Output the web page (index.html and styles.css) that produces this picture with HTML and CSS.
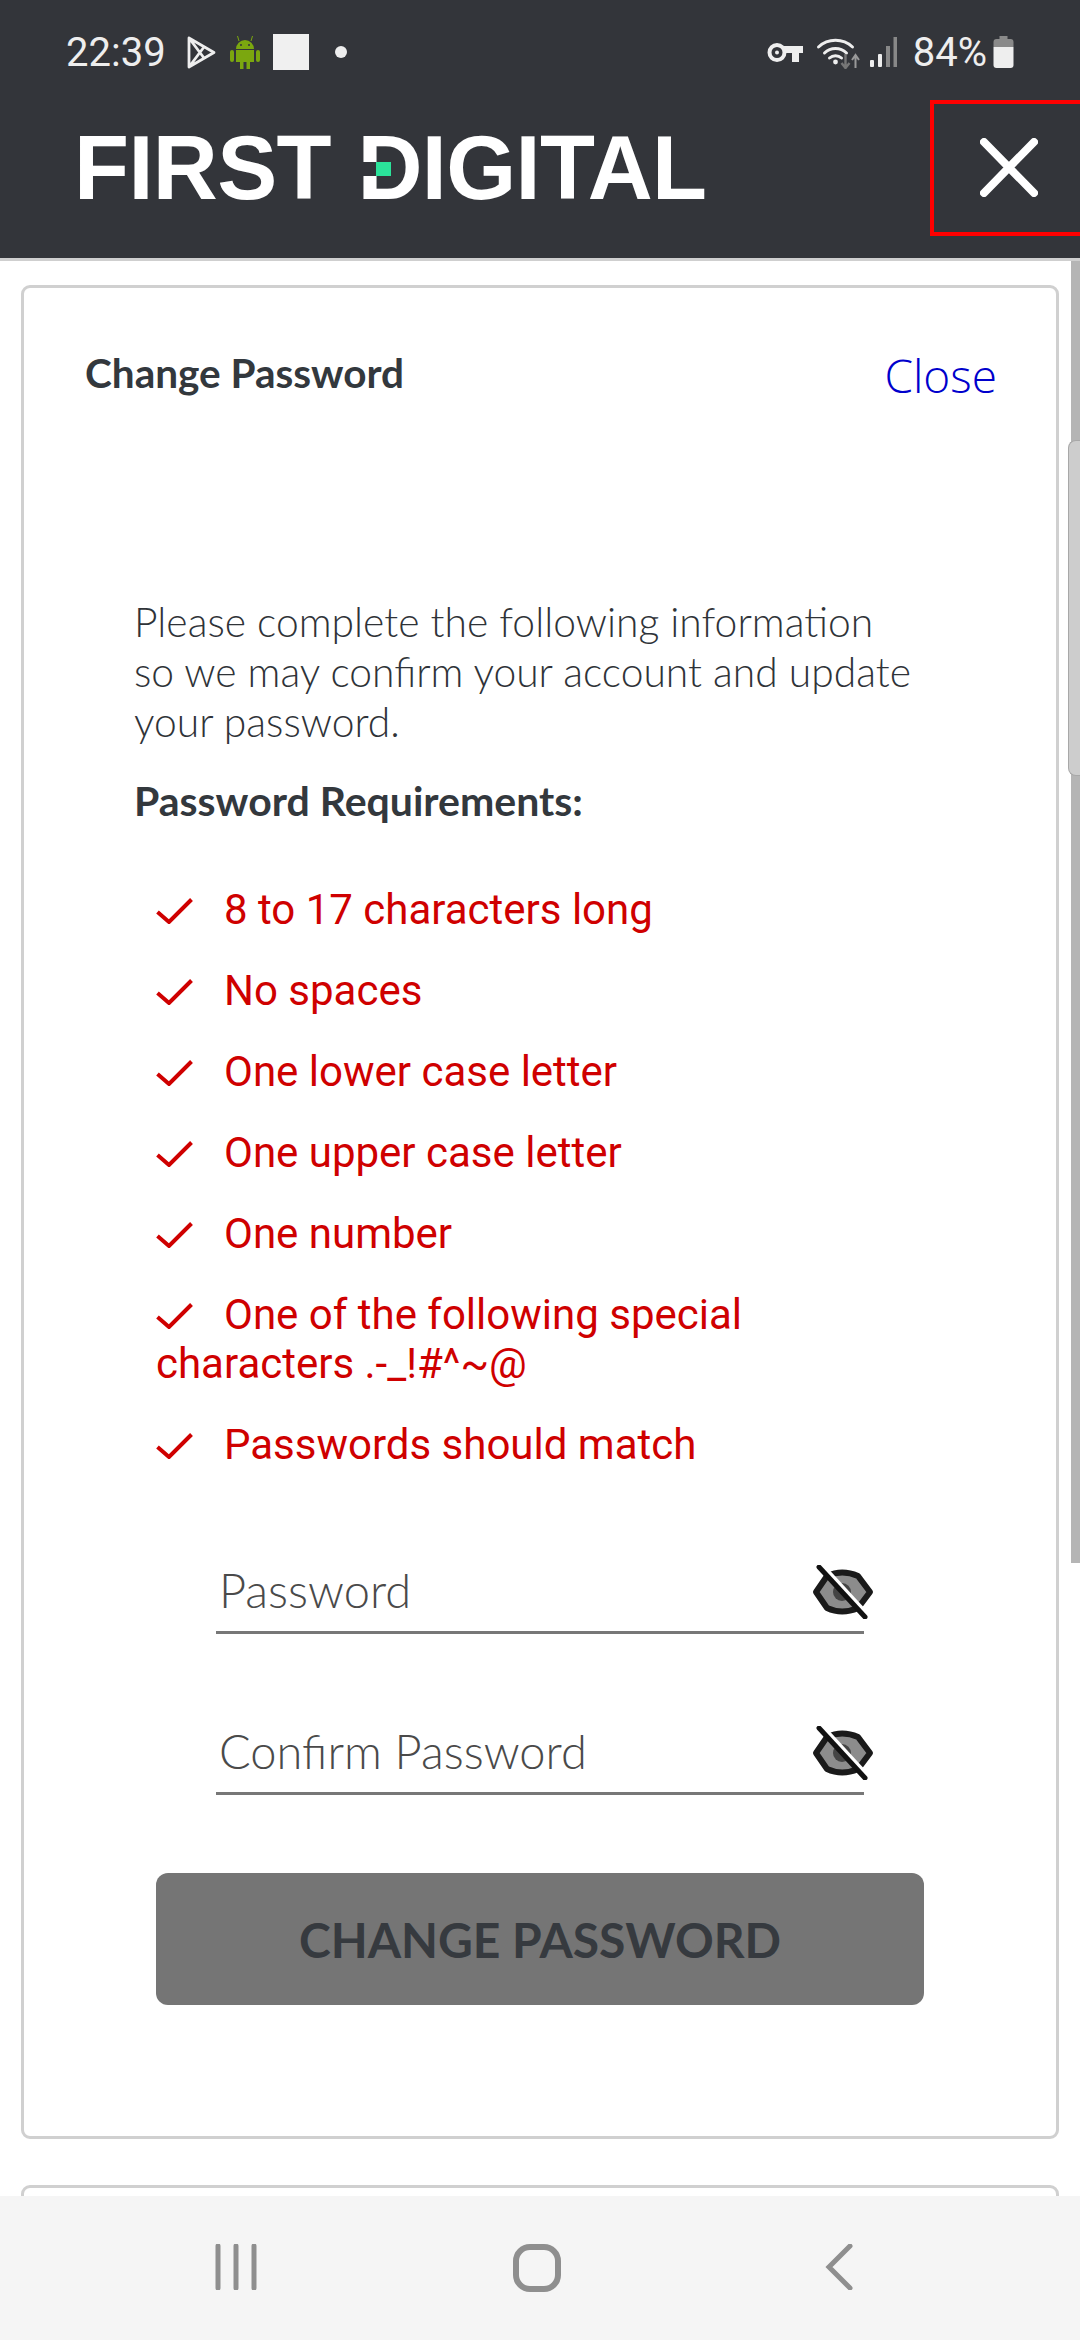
FILE: index.html
```html
<!DOCTYPE html>
<html lang="en">
<head>
    <meta charset="UTF-8">
    <meta name="viewport" content="width=device-width, initial-scale=1.0">
    <title>Change Password</title>
    <link rel="stylesheet" href="styles.css">
</head>
<body>
    <header class="top">
        <div class="status">
            <div class="status-left">
                <span class="clock">22:39</span>
                <svg class="ic-play" viewBox="0 0 30 33"><path d="M3 2 L28 16.5 L3 31 Z M3 2 L18 22 M3 31 L18 11" fill="none" stroke="#eee" stroke-width="2.8" stroke-linejoin="round"/></svg>
                <svg class="ic-android" viewBox="0 0 30 35"><path d="M6 14 A9 9 0 0 1 24 14 Z M6 15 H24 V27 H20 V34 H16.5 V27 H13.5 V34 H10 V27 H6 Z" fill="#7ba70f"/><rect x="0" y="15" width="4" height="12" rx="2" fill="#7ba70f"/><rect x="26" y="15" width="4" height="12" rx="2" fill="#7ba70f"/><path d="M9 6 L7.5 1 M21 6 L22.5 1" stroke="#7ba70f" stroke-width="1"/><circle cx="11" cy="10" r="1" fill="#33353a"/><circle cx="19" cy="10" r="1" fill="#33353a"/></svg>
                <span class="ic-square"></span>
                <span class="ic-dot"></span>
            </div>
            <div class="status-right">
                <svg class="ic-key" viewBox="0 0 36 21"><circle cx="10" cy="10.5" r="7.5" fill="none" stroke="#eee" stroke-width="4"/><circle cx="10" cy="10.5" r="2" fill="#eee"/><path d="M17 4 H36 V11 H32 V20 H25 V11 H17 Z" fill="#eee"/></svg>
                <svg class="ic-wifi" viewBox="0 0 44 33"><path d="M2 11 A25 25 0 0 1 36 11 M8 17 A16 16 0 0 1 30 17 M13 22 A9 9 0 0 1 25 22" fill="none" stroke="#eee" stroke-width="3" stroke-linecap="round"/><circle cx="19" cy="26" r="2.4" fill="#eee"/><path d="M29 18 V31 M25 27 L29 32 L33 27" fill="none" stroke="#777" stroke-width="2.4"/><path d="M39 32 V20 M35.5 24 L39 19 L42.5 24" fill="none" stroke="#999" stroke-width="2"/></svg>
                <svg class="ic-signal" viewBox="0 0 27 30"><rect x="0" y="23" width="4" height="7" rx="1" fill="#eee"/><rect x="8" y="17" width="4" height="13" rx="1" fill="#eee"/><rect x="16" y="9" width="4" height="21" fill="#888"/><rect x="23.5" y="0" width="3.5" height="30" fill="#888"/></svg>
                <span class="clock pct">84%</span>
                <svg class="ic-battery" viewBox="0 0 20 32"><path d="M6 0 H14 V3 H17 Q20 3 20 6 V11 H0 V6 Q0 3 3 3 H6 Z" fill="#8a8a8a"/><path d="M0 11 H20 V29 Q20 32 17 32 H3 Q0 32 0 29 Z" fill="#eee"/></svg>
            </div>
        </div>
        <div class="brand">
            <span class="logo">FIRST <span class="logo-d">D<i class="d-cut"></i><i class="d-pixel"></i></span>IGITAL</span>
            <button class="x-btn" aria-label="Close">
                <svg viewBox="0 0 58 59"><path d="M4 4 L54 55 M54 4 L4 55" stroke="#fff" stroke-width="8" stroke-linecap="round"/></svg>
            </button>
        </div>
    </header>

    <main class="content">
        <section class="card">
            <div class="card-head">
                <h1 class="card-title">Change Password</h1>
                <a class="close-link">Close</a>
            </div>
            <div class="card-body">
                <p class="intro">Please complete the following information<br>so we may confirm your account and update<br>your password.</p>
                <p class="req-title">Password Requirements:</p>
                <ul class="reqs">
                    <li><svg class="check" viewBox="0 0 37 26"><path d="M1.5 14 L13 24 L35.5 1.5"/></svg>8 to 17 characters long</li>
                    <li><svg class="check" viewBox="0 0 37 26"><path d="M1.5 14 L13 24 L35.5 1.5"/></svg>No spaces</li>
                    <li><svg class="check" viewBox="0 0 37 26"><path d="M1.5 14 L13 24 L35.5 1.5"/></svg>One lower case letter</li>
                    <li><svg class="check" viewBox="0 0 37 26"><path d="M1.5 14 L13 24 L35.5 1.5"/></svg>One upper case letter</li>
                    <li><svg class="check" viewBox="0 0 37 26"><path d="M1.5 14 L13 24 L35.5 1.5"/></svg>One number</li>
                    <li><svg class="check" viewBox="0 0 37 26"><path d="M1.5 14 L13 24 L35.5 1.5"/></svg>One of the following special characters .-_!#^~@</li>
                    <li><svg class="check" viewBox="0 0 37 26"><path d="M1.5 14 L13 24 L35.5 1.5"/></svg>Passwords should match</li>
                </ul>
                <div class="field">
                    <span class="field-label">Password</span>
                    <svg class="eye" viewBox="0 0 62 54"><path d="M4 27 L15 11 Q30 4 46 11 L58 27 L46 43 Q30 50 15 43 Z" fill="#8c8c8c" stroke="#1a1a1a" stroke-width="6" stroke-linejoin="round"/><circle cx="30" cy="27" r="9" fill="#444"/><path d="M10 2 L56 52" stroke="#fff" stroke-width="7"/><path d="M7 2 L53 52" stroke="#111" stroke-width="5" stroke-linecap="round"/></svg>
                </div>
                <div class="field">
                    <span class="field-label">Confirm Password</span>
                    <svg class="eye" viewBox="0 0 62 54"><path d="M4 27 L15 11 Q30 4 46 11 L58 27 L46 43 Q30 50 15 43 Z" fill="#8c8c8c" stroke="#1a1a1a" stroke-width="6" stroke-linejoin="round"/><circle cx="30" cy="27" r="9" fill="#444"/><path d="M10 2 L56 52" stroke="#fff" stroke-width="7"/><path d="M7 2 L53 52" stroke="#111" stroke-width="5" stroke-linecap="round"/></svg>
                </div>
                <button class="submit">CHANGE PASSWORD</button>
            </div>
        </section>
        <section class="card card-next"></section>
    </main>

    <nav class="navbar">
        <svg class="nav-recent" viewBox="0 0 42 46"><path d="M3 2 V44 M21 2 V44 M39 2 V44"/></svg>
        <svg class="nav-home" viewBox="0 0 48 48"><rect x="3" y="3" width="42" height="42" rx="14"/></svg>
        <svg class="nav-back" viewBox="0 0 28 46"><path d="M25 2 L4 23 L25 44"/></svg>
    </nav>

    <div class="scroll-track"><div class="scroll-thumb"></div></div>
    <div class="red-box"></div>
</body>
</html>
```

FILE: styles.css
```css
* { box-sizing: border-box; }
html, body { margin: 0; padding: 0; }
body {
    position: relative;
    width: 1080px;
    height: 2340px;
    overflow: hidden;
    display: flex;
    flex-direction: column;
    background: #fff;
    font-family: Lato, "Liberation Sans", sans-serif;
}

/* top bar */
.top { height: 261px; flex: none; background: #33353a; border-bottom: 3px solid #cfcfcf; }
.status { height: 100px; padding: 30px 66px 0 66px; display: flex; justify-content: space-between; align-items: flex-start; }
.status-left, .status-right { display: flex; align-items: center; height: 44px; }
.clock { font-family: Roboto, sans-serif; font-size: 40px; color: #eee; }
.ic-play { width: 30px; height: 33px; margin-left: 20px; }
.ic-android { width: 30px; height: 35px; margin-left: 14px; }
.ic-square { width: 36px; height: 36px; margin-left: 13px; background: #f0f0f0; }
.ic-dot { width: 12px; height: 12px; margin-left: 26px; border-radius: 50%; background: #eee; }
.ic-key { width: 36px; height: 21px; }
.ic-wifi { width: 45px; height: 33px; margin-left: 13px; }
.ic-signal { width: 27px; height: 30px; margin-left: 9px; }
.pct { margin-left: 16px; }
.ic-battery { width: 21px; height: 32px; margin-left: 6px; }

.brand { height: 158px; padding: 18px 42px 0 74px; display: flex; justify-content: space-between; align-items: flex-start; }
.logo { font-family: "Liberation Sans", Arial, sans-serif; font-weight: 700; font-size: 90px; line-height: 100px; color: #fff; letter-spacing: -0.6px; word-spacing: 2px; white-space: nowrap; }
.logo-d { position: relative; display: inline-block; }
.d-cut { position: absolute; left: 4px; top: 44px; width: 15px; height: 14px; background: #33353a; }
.d-pixel { position: absolute; left: 19px; top: 44px; width: 15px; height: 14px; background: #2be39a; }
.x-btn { width: 58px; height: 59px; margin: 20px 0 0; padding: 0; border: 0; background: none; }
.x-btn svg { display: block; width: 58px; height: 59px; }

/* scrolling part */
.content { flex: 1; min-height: 0; overflow: hidden; padding: 24px 21px 0; }
.card { height: 1854px; border: 3px solid #d0d0d0; border-radius: 9px; background: #fff; }
.card-next { height: 120px; margin-top: 46px; }
.card-head { display: flex; justify-content: space-between; padding: 57px 59px 0 61px; height: 309px; }
.card-title { margin: 0; font-size: 40.5px; font-weight: 700; line-height: 56px; color: #33383d; }
.close-link { font-family: "Open Sans", sans-serif; font-weight: 300; font-size: 46px; line-height: 60px; color: #0000cc; }

.card-body { padding: 0 86px 0 110px; }
.intro { margin: 0; font-size: 40.8px; font-weight: 300; line-height: 50px; color: #2f3338; white-space: nowrap; }
.req-title { margin: 29px 0 0; font-size: 41px; font-weight: 700; line-height: 50px; color: #33383d; }
.reqs { margin: 59px 0 0; padding: 0 60px 0 22px; list-style: none; font-family: Roboto, sans-serif; font-size: 42px; line-height: 49px; color: #cf0000; }
.reqs li { margin-bottom: 32px; }
.check { width: 37px; height: 26px; margin-right: 31px; fill: none; stroke: #cf0000; stroke-width: 4; }

.field { position: relative; width: 648px; height: 70px; margin: 95px 0 0 82px; padding: 0 0 0 3px; border-bottom: 3px solid #777; }
.field + .field { margin-top: 91px; }
.field-label { font-size: 47px; font-weight: 300; line-height: 52px; color: #4a4a4a; }
.eye { position: absolute; right: -10px; top: 1px; width: 62px; height: 54px; }
.submit { display: block; width: 768px; height: 132px; margin: 78px 0 0 22px; border: 0; border-radius: 12px; background: #757575; color: #363a3f; font-family: Lato, sans-serif; font-size: 48px; font-weight: 700; }

/* android nav */
.navbar { height: 144px; flex: none; background: #f5f5f5; display: flex; }
.navbar svg { position: relative; top: 48px; fill: none; stroke: #8f8f8f; }
.nav-recent { width: 42px; height: 46px; margin-left: 215px; stroke-width: 5; stroke-linecap: round; }
.nav-home { width: 48px; height: 48px; margin-left: 256px; stroke-width: 6; }
.nav-back { width: 28px; height: 46px; margin-left: 264px; stroke-width: 5; stroke-linecap: round; }

/* overlays */
.scroll-track { position: absolute; left: 1071px; top: 261px; width: 9px; height: 1302px; background: #b5b5b5; }
.scroll-thumb { position: absolute; left: -3px; top: 179px; width: 12px; height: 336px; background: #cdcdcd; border-left: 1px solid #a8a8a8; border-top: 1px solid #a8a8a8; border-bottom: 1px solid #a8a8a8; border-radius: 8px 0 0 8px; }
.red-box { position: absolute; left: 930px; top: 100px; width: 156px; height: 136px; border: 4px solid #f00; }
```
